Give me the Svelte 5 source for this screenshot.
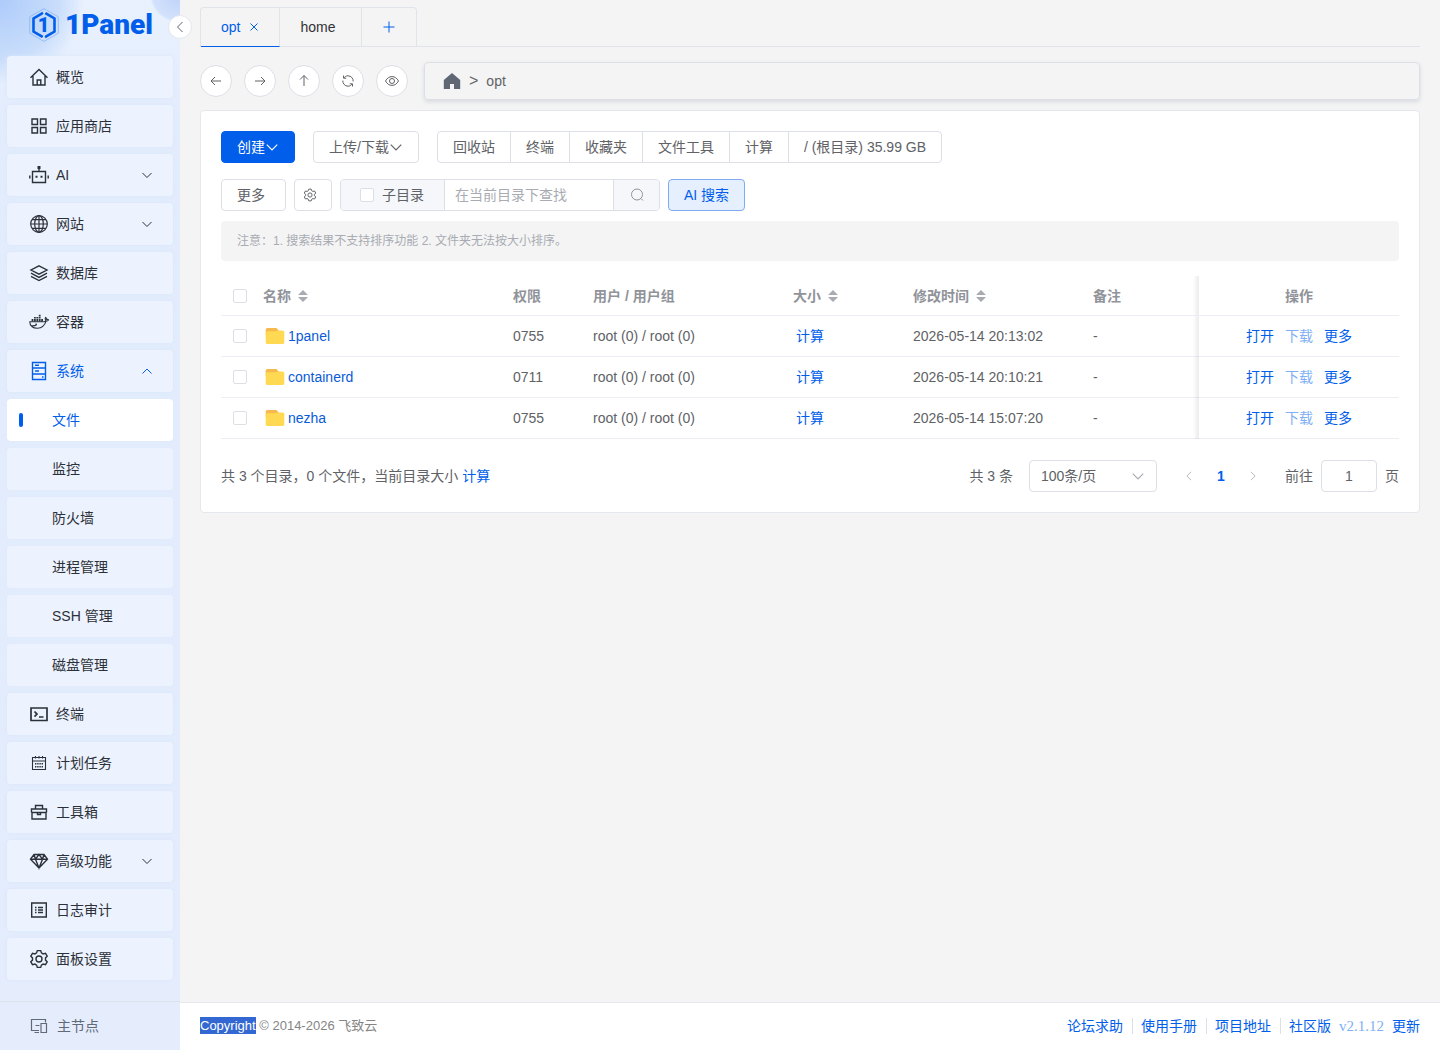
<script lang="ts">
  interface MenuItem {
    label: string;
    icon?: string;
    arrow?: 'down' | 'up';
    child?: boolean;
    active?: boolean;
  }

  interface FileRow {
    name: string;
    mode: string;
    owner: string;
    modified: string;
    remark: string;
    checked: boolean;
  }

  const menu: MenuItem[] = [
    { label: '概览', icon: 'home' },
    { label: '应用商店', icon: 'store' },
    { label: 'AI', icon: 'robot', arrow: 'down' },
    { label: '网站', icon: 'globe', arrow: 'down' },
    { label: '数据库', icon: 'layers' },
    { label: '容器', icon: 'docker' },
    { label: '系统', icon: 'server', arrow: 'up', active: true },
    { label: '文件', child: true, active: true },
    { label: '监控', child: true },
    { label: '防火墙', child: true },
    { label: '进程管理', child: true },
    { label: 'SSH 管理', child: true },
    { label: '磁盘管理', child: true },
    { label: '终端', icon: 'terminal' },
    { label: '计划任务', icon: 'calendar' },
    { label: '工具箱', icon: 'toolbox' },
    { label: '高级功能', icon: 'diamond', arrow: 'down' },
    { label: '日志审计', icon: 'log' },
    { label: '面板设置', icon: 'gear' }
  ];

  const tools = ['回收站', '终端', '收藏夹', '文件工具', '计算', '/ (根目录) 35.99 GB'];
  const navButtons = [
    { icon: 'left', label: '后退' },
    { icon: 'right', label: '前进' },
    { icon: 'up', label: '上一级' },
    { icon: 'refresh', label: '刷新' },
    { icon: 'view', label: '显示隐藏文件' }
  ];
  const footerLinks = ['论坛求助', '使用手册', '项目地址'];

  let rows: FileRow[] = $state([
    { name: '1panel', mode: '0755', owner: 'root (0) / root (0)', modified: '2026-05-14 20:13:02', remark: '-', checked: false },
    { name: 'containerd', mode: '0711', owner: 'root (0) / root (0)', modified: '2026-05-14 20:10:21', remark: '-', checked: false },
    { name: 'nezha', mode: '0755', owner: 'root (0) / root (0)', modified: '2026-05-14 15:07:20', remark: '-', checked: false }
  ]);

  let keyword = $state('');
  let containSub = $state(false);
  let pageSize = $state('100');
  let jumpPage = $state('1');
  let allChecked = $derived(rows.every((row) => row.checked));

  function toggleAll() {
    const next = !allChecked;
    rows.forEach((row) => (row.checked = next));
  }
</script>

{#snippet chevron(dir: string, size: number)}
  <svg class="line" width={size} height={size} viewBox="0 0 12 12" aria-hidden="true">
    {#if dir === 'down'}
      <path d="M1.500 4 6 8.500 10.500 4" />
    {:else if dir === 'up'}
      <path d="M1.500 8.500 6 4l4.500 4.500" />
    {:else if dir === 'left'}
      <path d="M8.500 1 3.500 6l5 5" />
    {:else}
      <path d="M3.500 1l5 5-5 5" />
    {/if}
  </svg>
{/snippet}

{#snippet gearShape()}
  <path d="M8.300 1.600h3.400l.7 2.300 1.700 1 2.400-.6 1.700 2.900-1.700 1.700v2.200l1.700 1.700-1.700 2.900-2.400-.6-1.700 1-.7 2.300H8.300l-.7-2.300-1.700-1-2.400.6-1.700-2.900 1.700-1.700V8.900L1.800 7.200l1.700-2.900 2.400.6 1.700-1z" />
  <circle cx="10" cy="10" r="3" />
{/snippet}

{#snippet menuIcon(name: string)}
  <svg class="menu-icon" width="20" height="20" viewBox="0 0 20 20" aria-hidden="true">
    {#if name === 'home'}
      <path d="M1.500 10.800 10 2.500l8.500 8.300M4 9v9h12V9M8.200 18v-5h3.600v5" />
    {:else if name === 'store'}
      <path d="M3 3h5.500v5.500H3zM11.500 3H17v5.500h-5.500zM3 11.500h5.500V17H3zM11.500 11.500H17V17h-5.500z" />
    {:else if name === 'robot'}
      <path d="M3.500 6.500h13v11h-13zM10 6.500V3M.8 10.500v3M19.200 10.500v3" />
      <path class="solid" d="M8.500 1h3v3h-3zM6.500 10.700h2v2h-2zM11.500 10.700h2v2h-2z" />
    {:else if name === 'globe'}
      <g stroke-width="1.200">
        <circle cx="10" cy="10" r="8.300" />
        <ellipse cx="10" cy="10" rx="4.300" ry="8.300" />
        <path d="M10 1.700v16.600M1.700 10h16.600M3 5.700h14M3 14.300h14" />
      </g>
    {:else if name === 'layers'}
      <path d="M10 2.800 18 7l-8 4.200L2 7zM2 10.200l8 4.200 8-4.200M2 13.300l8 4.200 8-4.200" />
    {:else if name === 'docker'}
      <g stroke-width="1.100">
        <path d="M.8 9.700h14.400c1 0 1.500-.5 1.700-1.500-.9-.9-.8-1.900-.3-2.800 1 .5 1.400 1.200 1.300 2 .7-.1 1.300.1 1.700.5-.5.9-1.300 1.300-2.500 1.300-1.500 4.500-4.300 7-8.600 7-5 0-7.700-2.400-7.700-6.500zM1.800 13.800c2.500.3 4.500 0 6-1.300" />
      </g>
      <path class="solid" d="M2.600 7h1.800v2.400H2.600zM5 7h1.800v2.400H5zM7.400 7h1.800v2.400H7.400zM9.800 7h1.800v2.400H9.800zM12.200 7H14v2.400h-1.800zM5 4.900h1.800v1.700H5zM7.400 4.900h1.800v1.700H7.400zM9.800 4.900h1.800v1.700H9.800zM9.800 2.800h1.800v1.700H9.800zM6.500 11.500h1.200v1.200H6.500z" />
    {:else if name === 'server'}
      <path d="M3.500 1.500h13v17h-13zM3.500 7h13M3.500 13h13M6 4.200h4M6 10h4M13 16h1.500" />
    {:else if name === 'terminal'}
      <g stroke-width="1.700">
        <path d="M2 4h16v12.500H2zM5.500 7.500 8 10.100l-2.500 2.600M10 13h4.500" />
      </g>
    {:else if name === 'calendar'}
      <g stroke-width="1.100">
        <path d="M3.500 4.500h13v12h-13zM3.500 8h13M6.500 3v2.500M10 3v2.500M13.500 3v2.500" />
      </g>
      <path class="solid" d="M6 10h1.400v1.400H6zM8.200 10h1.400v1.400H8.200zM10.400 10h1.400v1.400h-1.400zM12.600 10H14v1.400h-1.400zM6 13h1.400v1.400H6zM8.200 13h1.400v1.400H8.200zM10.400 13h1.400v1.400h-1.400zM12.600 13H14v1.400h-1.400z" />
    {:else if name === 'toolbox'}
      <path d="M3 10.500V17h14v-6.500M2.500 10.500V7h15v3.500M2.500 10.500h15M6.500 7V3.500h7V7M8.500 10.500v2h3v-2" />
    {:else if name === 'diamond'}
      <path d="M5 3.500h10l3.500 4.700L10 17 1.500 8.200zM1.500 8.200h17M5 3.500l1.500 4.700L10 17l3.500-8.800L15 3.500M6.500 8.200 10 3.500l3.500 4.700" />
    {:else if name === 'log'}
      <path d="M2.700 3h14.600v14H2.700zM9 7.500h5M9 10h5M9 12.500h5M6 7.500h1.500M6 10h1.500M6 12.500h1.500" />
    {:else if name === 'gear'}
      {@render gearShape()}
    {:else if name === 'node'}
      <g stroke-width="1.200">
        <path d="M10 14.500H2.500v-11h14v3M5.500 16.500H10M6.500 9.500h4M12 7.500h5.500v9H12z" />
      </g>
    {/if}
  </svg>
{/snippet}

{#snippet sorter()}
  <svg class="sorter" width="10" height="14" viewBox="0 0 10 14" aria-hidden="true">
    <path d="M5 1l5 5H0zM0 8h10l-5 5z" />
  </svg>
{/snippet}

<div class="layout">
  <aside class="sidebar">
    <a class="logo" href="#home">
      <svg width="30" height="34" viewBox="0 0 30 34" aria-hidden="true">
        <path class="hex-outer" d="M15 .6 29.300 8.800v16.400L15 33.400.7 25.200V8.800z" />
        <path class="hex" d="m14 4.800-9.500 5.700v13l9.500 5.700M16 29.200l9.500-5.700v-13L16 4.800" />
        <path class="cut" d="m17.500 2.500-3.500 5M12.500 31.500l3.500-5" />
        <text x="14.500" y="24" text-anchor="middle">1</text>
      </svg>
      <span>1Panel</span>
    </a>
    <button class="collapse" aria-label="收起菜单">{@render chevron('left', 12)}</button>

    <nav class="menu">
      {#each menu as item}
        <a
          href="#{item.label}"
          class="menu-item"
          class:child={item.child}
          class:active={item.active}
        >
          {#if item.icon}{@render menuIcon(item.icon)}{/if}
          <span>{item.label}</span>
          {#if item.arrow}
            <i class="arrow">{@render chevron(item.arrow, 12)}</i>
          {/if}
        </a>
      {/each}
    </nav>

    <button class="node">
      {@render menuIcon('node')}
      <span>主节点</span>
    </button>
  </aside>

  <main>
    <div class="content">
      <div class="tabs">
        <div class="tab-list">
          <div class="tab current">
            <a href="#opt">opt</a>
            <button aria-label="关闭标签">
              <svg class="line" width="10" height="10" viewBox="0 0 10 10"><path d="m1.500 1.500 7 7M8.500 1.500l-7 7" /></svg>
            </button>
          </div>
          <div class="tab"><a href="#home-tab">home</a></div>
          <button class="tab add" aria-label="新增标签">
            <svg class="line" width="12" height="12" viewBox="0 0 12 12"><path d="M6 .5v11M.5 6h11" /></svg>
          </button>
        </div>
      </div>

      <div class="path-row">
        <div class="nav-buttons">
          {#each navButtons as button}
            <button class="round" aria-label={button.label}>
              <svg class="line" width="14" height="14" viewBox="0 0 14 14">
                {#if button.icon === 'left'}
                  <path d="M12 7H2M6 3 2 7l4 4" />
                {:else if button.icon === 'right'}
                  <path d="M2 7h10M8 3l4 4-4 4" />
                {:else if button.icon === 'up'}
                  <path d="M7 12V1.500M3 5.500l4-4 4 4" />
                {:else if button.icon === 'refresh'}
                  <path d="M12.200 7.500c.2-3-2-5.700-5.200-5.700-1.700 0-3.200.8-4.200 2.200M2.500 1.500V4.200H5.200M1.800 6.500c-.2 3 2 5.700 5.200 5.700 1.700 0 3.200-.8 4.200-2.200M11.500 12.500V9.800H8.800" />
                {:else}
                  <path d="M.5 7C2 4.200 4.200 2.600 7 2.600S12 4.200 13.500 7C12 9.800 9.800 11.400 7 11.400S2 9.800.5 7z" />
                  <circle cx="7" cy="7" r="2.500" />
                {/if}
              </svg>
            </button>
          {/each}
        </div>
        <div class="path-bar">
          <a href="#root" aria-label="根目录">
            <svg width="18" height="16" viewBox="0 0 18 16"><path d="M9 0 .8 7v9H7v-5h4v5h6.200V7z" /></svg>
          </a>
          <span class="sep">&gt;</span>
          <a href="#opt">opt</a>
        </div>
      </div>

      <section class="card">
        <div class="toolbar">
          <button class="btn primary">创建{@render chevron('down', 14)}</button>
          <button class="btn">上传/下载{@render chevron('down', 14)}</button>
          <div class="btn-group">
            {#each tools as tool}
              <button class="btn">{tool}</button>
            {/each}
          </div>
        </div>

        <div class="toolbar search-row">
          <button class="btn wide">更多</button>
          <button class="btn setting" aria-label="列设置">
            <svg class="line" width="14" height="14" viewBox="0 0 20 20">{@render gearShape()}</svg>
          </button>
          <div class="search">
            <label class="sub-dir">
              <input type="checkbox" bind:checked={containSub} />
              <span>子目录</span>
            </label>
            <input
              type="text"
              aria-label="查找"
              placeholder="在当前目录下查找"
              bind:value={keyword}
            />
            <button aria-label="搜索">
              <svg class="line" width="14" height="14" viewBox="0 0 14 14"><circle cx="7" cy="6.500" r="5.500" /><path d="m11 10.500 2 2" /></svg>
            </button>
          </div>
          <button class="btn ai">AI 搜索</button>
        </div>

        <p class="notice">注意：1. 搜索结果不支持排序功能 2. 文件夹无法按大小排序。</p>

        <table>
          <colgroup>
            <col class="c-check" />
            <col class="c-name" />
            <col class="c-mode" />
            <col class="c-owner" />
            <col class="c-size" />
            <col class="c-time" />
            <col />
            <col class="c-ops" />
          </colgroup>
          <thead>
            <tr>
              <th class="check">
                <input type="checkbox" aria-label="全选" checked={allChecked} onchange={toggleAll} />
              </th>
              <th>名称 {@render sorter()}</th>
              <th>权限</th>
              <th>用户 / 用户组</th>
              <th>大小 {@render sorter()}</th>
              <th>修改时间 {@render sorter()}</th>
              <th>备注</th>
              <th class="ops">操作</th>
            </tr>
          </thead>
          <tbody>
            {#each rows as row (row.name)}
              <tr>
                <td class="check">
                  <input type="checkbox" aria-label={row.name} bind:checked={row.checked} />
                </td>
                <td>
                  <a class="file" href="#{row.name}">
                    <svg width="20" height="18" viewBox="0 0 20 18" aria-hidden="true">
                      <path fill="#f7b84e" d="M2.500 1h9l2.500 3v4H.7V3c0-1.200.7-2 1.800-2z" />
                      <path fill="#ffd952" d="M.7 6c0-1.100.7-1.800 1.800-1.800h8L13 3.500h4.500c1.100 0 1.800.8 1.800 1.800v9.900c0 1.100-.7 1.800-1.800 1.800h-15c-1.100 0-1.800-.7-1.800-1.800z" />
                    </svg>
                    {row.name}
                  </a>
                </td>
                <td>{row.mode}</td>
                <td>{row.owner}</td>
                <td><button class="link size">计算</button></td>
                <td>{row.modified}</td>
                <td>{row.remark}</td>
                <td class="ops">
                  <div class="actions">
                    <button class="link">打开</button>
                    <button class="link" disabled>下载</button>
                    <button class="link">更多</button>
                  </div>
                </td>
              </tr>
            {/each}
          </tbody>
        </table>

        <div class="table-footer">
          <div class="summary">
            共 3 个目录，0 个文件，当前目录大小 <button class="link">计算</button>
          </div>
          <div class="pagination">
            <span>共 3 条</span>
            <div class="select">
              <select aria-label="每页条数" bind:value={pageSize}>
                <option value="100">100条/页</option>
                <option value="200">200条/页</option>
              </select>
              <i>{@render chevron('down', 14)}</i>
            </div>
            <div class="pager">
              <button disabled aria-label="上一页">{@render chevron('left', 10)}</button>
              <button class="page">1</button>
              <button disabled aria-label="下一页">{@render chevron('right', 10)}</button>
            </div>
            <label class="jump">
              <span>前往</span>
              <input type="text" bind:value={jumpPage} />
              <span>页</span>
            </label>
          </div>
        </div>
      </section>
    </div>

    <footer>
      <div class="copyright"><mark>Copyright</mark> © 2014-2026 飞致云</div>
      <div class="footer-links">
        {#each footerLinks as link}
          <a class="divided" href="#{link}">{link}</a>
        {/each}
        <a href="#edition">社区版</a>
        <span class="version">v2.1.12</span>
        <button class="link">更新</button>
      </div>
    </footer>
  </main>
</div>

<style>
  :global(body) {
    margin: 0;
    background: #f4f4f4;
  }

  .layout {
    display: flex;
    min-height: 100vh;
    color: #606266;
    font-family: "Liberation Sans", "Noto Sans CJK SC", sans-serif;
    font-size: 14px;
    line-height: 20px;
  }

  .layout :is(button, input, select) {
    box-sizing: border-box;
    margin: 0;
    padding: 0;
    font: inherit;
    color: inherit;
  }

  button {
    border: none;
    background: none;
    cursor: pointer;
  }

  a {
    color: inherit;
    text-decoration: none;
  }

  i {
    display: flex;
  }

  .line {
    fill: none;
    stroke: currentColor;
    stroke-width: 1;
    flex: none;
  }

  /* sidebar */
  .sidebar {
    position: relative;
    display: flex;
    flex-direction: column;
    box-sizing: border-box;
    flex: 0 0 180px;
    background:
      radial-gradient(circle at 178px -6px, #bdd2fa 0, #d3e2fc 26px, transparent 28px),
      radial-gradient(circle at 0 0, #adcbfa 0, #cadefb 60px, transparent 84px),
      linear-gradient(#e9f1fe 0, #e2ecfc 130px, #e2ecfc 700px, #e5edfd 100%);
  }

  .logo {
    display: flex;
    align-items: center;
    gap: 6px;
    height: 50px;
    padding-left: 29px;
    color: #005eeb;
    font-family: Roboto, sans-serif;
    font-weight: 900;
    font-size: 28px;
  }

  .logo path {
    fill: none;
    stroke: #005eeb;
  }

  .logo .hex-outer {
    stroke: #7fb0f5;
    stroke-width: 0.700;
  }

  .logo .hex {
    stroke-width: 2.600;
  }

  .logo .cut {
    stroke: #dce9fd;
    stroke-width: 1;
  }

  .logo text {
    fill: #005eeb;
    font-size: 20px;
  }

  .collapse {
    position: absolute;
    top: 15px;
    right: -12px;
    display: flex;
    align-items: center;
    justify-content: center;
    width: 24px;
    height: 24px;
    border: 1px solid #e4e7ed;
    border-radius: 50%;
    background: #fff;
  }

  .menu {
    display: flex;
    flex-direction: column;
    gap: 7px;
    padding: 6px 7px 21px;
  }

  .menu-item {
    display: flex;
    align-items: center;
    gap: 7px;
    height: 42px;
    padding: 0 20px 0 22px;
    border-radius: 4px;
    background: #edf3fe;
    box-shadow: 0 0 4px #d9e6fb;
    color: #2c3039;
  }

  .menu-icon {
    flex: none;
    fill: none;
    stroke: currentColor;
    stroke-width: 1.400;
  }

  .menu-icon .solid {
    fill: currentColor;
    stroke: none;
  }

  .menu-item.child {
    position: relative;
    padding-left: 45px;
    box-shadow: 0 0 4px #e0eafc;
  }

  .menu-item.active {
    color: #005eeb;
  }

  .menu-item.child.active {
    background: #fff;
  }

  .menu-item.child.active::before {
    content: '';
    position: absolute;
    left: 12px;
    width: 4px;
    height: 14px;
    border-radius: 2px;
    background: #005eeb;
  }

  .arrow {
    margin-left: auto;
  }

  .node {
    display: flex;
    align-items: center;
    gap: 8px;
    height: 48px;
    margin-top: auto;
    padding: 0 29px !important;
    border-top: 1px solid #dbe3ef;
    color: #606a78 !important;
  }

  /* main */
  main {
    display: flex;
    flex: 1;
    flex-direction: column;
    min-width: 0;
  }

  .content {
    flex: 1;
    padding: 7px 20px 20px;
  }

  .tabs {
    border-bottom: 1px solid #e0e3ea;
    margin-bottom: 15px;
  }

  .tab-list {
    display: inline-flex;
    height: 39px;
    margin-bottom: -1px;
    border: 1px solid #e0e3ea;
    border-bottom: none;
    border-radius: 4px 4px 0 0;
    vertical-align: bottom;
  }

  .tab {
    display: flex;
    align-items: center;
    gap: 9px;
    padding: 0 20px;
    border-right: 1px solid #e0e3ea;
    color: #303133;
  }

  .tab:not(.current, .add) {
    padding-right: 25px;
    padding-bottom: 1px;
  }

  .tab.current {
    border-bottom: 1px solid #005eeb;
    color: #005eeb;
  }

  .tab.current button {
    display: flex;
  }

  .tab.add {
    border-right: none;
    padding: 0 21px 1px;
    color: #005eeb;
  }

  .path-row {
    display: flex;
    align-items: center;
    gap: 16px;
    margin-bottom: 10px;
  }

  .nav-buttons {
    display: flex;
    gap: 12px;
  }

  .round {
    display: flex;
    align-items: center;
    justify-content: center;
    width: 32px;
    height: 32px;
    border: 1px solid #dcdfe6;
    border-radius: 50%;
    background: #fff;
  }

  .path-bar {
    display: flex;
    flex: 1;
    align-items: center;
    gap: 8px;
    height: 36px;
    padding: 0 17px 0 18px;
    border: 1px solid #dcdfe6;
    border-radius: 4px;
    box-shadow: 0 2px 4px #d8dadf;
  }

  .path-bar a {
    display: flex;
  }

  .path-bar svg {
    fill: #606774;
  }

  .path-bar .sep {
    font-size: 16px;
  }

  .card {
    padding: 20px;
    border: 1px solid #e4e7ed;
    border-radius: 4px;
    background: #fff;
  }

  .toolbar {
    display: flex;
    gap: 18px;
    margin-bottom: 16px;
  }

  .search-row {
    gap: 8px;
    margin-bottom: 10px;
  }

  .toolbar .btn {
    display: flex;
    align-items: center;
    height: 32px;
    padding: 0 15px;
    border: 1px solid #dcdfe6;
    border-radius: 4px;
    background: #fff;
    white-space: nowrap;
  }

  .toolbar .primary {
    border-color: #005eeb;
    background: #005eeb;
    color: #fff;
  }

  .toolbar .ai {
    border-color: #7facee;
    background: #e5effd;
    color: #005eeb;
  }

  .toolbar .wide {
    padding-right: 20px;
  }

  .toolbar .setting {
    padding: 0 14px 0 8px;
  }

  .setting svg {
    stroke-width: 1.400;
  }

  .btn-group {
    display: flex;
  }

  .btn-group .btn + .btn {
    margin-left: -1px;
  }

  .btn-group .btn:not(:first-child) {
    border-top-left-radius: 0;
    border-bottom-left-radius: 0;
  }

  .btn-group .btn:not(:last-child) {
    border-top-right-radius: 0;
    border-bottom-right-radius: 0;
  }

  input[type='checkbox'] {
    appearance: none;
    flex: none;
    width: 14px;
    height: 14px;
    border: 1px solid #dcdfe6;
    border-radius: 2px;
    background: #fff;
  }

  input[type='checkbox']:checked {
    border-color: #005eeb;
    background: #005eeb;
  }

  input[type='text'] {
    min-width: 0;
    outline: none;
  }

  .search {
    display: flex;
    box-sizing: border-box;
    width: 320px;
    height: 32px;
    border: 1px solid #dcdfe6;
    border-radius: 4px;
    overflow: hidden;
  }

  .sub-dir {
    display: flex;
    align-items: center;
    gap: 8px;
    padding: 0 20px 0 19px;
    border-right: 1px solid #dcdfe6;
    background: #f5f7fa;
  }

  .search input[type='text'] {
    flex: 1;
    padding: 0 10px;
    border: none;
  }

  .search input::placeholder {
    color: #a8abb2;
  }

  .search button {
    display: flex;
    align-items: center;
    justify-content: center;
    width: 46px;
    border-left: 1px solid #dcdfe6;
    background: #f5f7fa;
    color: #909399;
  }

  .notice {
    margin: 0 0 15px;
    padding: 10px 16px;
    border-radius: 4px;
    background: #f4f4f4;
    color: #a8abb2;
    font-size: 12px;
  }

  table {
    width: 100%;
    table-layout: fixed;
    border-spacing: 0;
  }

  .c-check {
    width: 30px;
  }

  .c-name {
    width: 250px;
  }

  .c-mode {
    width: 80px;
  }

  .c-owner,
  .c-ops {
    width: 200px;
  }

  .c-size {
    width: 120px;
  }

  .c-time {
    width: 180px;
  }

  th,
  td {
    box-sizing: border-box;
    height: 41px;
    padding: 0 12px;
    border-bottom: 1px solid #ebeef5;
    text-align: left;
    white-space: nowrap;
  }

  th {
    height: 40px;
    color: #909399;
    font-weight: 700;
  }

  .check {
    padding-right: 0;
  }

  .check input {
    display: block;
  }

  .ops {
    position: relative;
    text-align: center;
  }

  .ops::before {
    content: '';
    position: absolute;
    top: 0;
    bottom: 0;
    left: -6px;
    width: 6px;
    background: linear-gradient(to right, transparent, rgba(0, 0, 0, 0.08));
  }

  td.ops::before {
    bottom: -1px;
  }

  .sorter {
    margin-left: 3px;
    fill: #a8abb2;
    vertical-align: -2px;
  }

  .file {
    display: flex;
    align-items: center;
    gap: 3px;
    padding-left: 2px;
    color: #0a5bd8;
  }

  .layout .link {
    color: #005eeb;
  }

  .layout .link:disabled {
    color: #80aff5;
  }

  .layout .size {
    padding-left: 3px;
  }

  .actions {
    display: flex;
    justify-content: center;
    gap: 11px;
  }

  .table-footer {
    display: flex;
    align-items: center;
    justify-content: space-between;
    margin-top: 21px;
  }

  .pagination {
    display: flex;
    align-items: center;
    gap: 16px;
  }

  .select {
    position: relative;
  }

  .select select {
    appearance: none;
    display: block;
    width: 128px;
    height: 32px;
    padding: 0 11px;
    border: 1px solid #dcdfe6;
    border-radius: 4px;
    background: #fff;
  }

  .select i {
    position: absolute;
    top: 9px;
    right: 12px;
    color: #a8abb2;
    pointer-events: none;
  }

  .pager {
    display: flex;
  }

  .pager button {
    display: flex;
    align-items: center;
    justify-content: center;
    width: 32px;
    height: 32px;
    color: #a8abb2;
  }

  .pager .page {
    color: #005eeb;
    font-weight: 700;
  }

  .jump {
    display: flex;
    align-items: center;
    gap: 8px;
  }

  .jump input {
    width: 56px;
    height: 32px;
    border: 1px solid #dcdfe6;
    border-radius: 4px;
    text-align: center;
  }

  footer {
    display: flex;
    align-items: center;
    justify-content: space-between;
    box-sizing: border-box;
    height: 48px;
    padding: 0 20px 2px;
    border-top: 1px solid #e4e7ed;
    background: #fff;
  }

  .copyright {
    color: #858585;
    font-size: 13px;
  }

  .copyright mark {
    padding: 1px 0;
    background: #3367d1;
    color: #fff;
  }

  .footer-links {
    display: flex;
    align-items: center;
    gap: 8px;
    color: #005eeb;
  }

  .divided {
    padding-right: 9px;
    border-right: 1px solid #dcdfe6;
    line-height: 16px;
  }

  .version {
    color: #80aff5;
    font-family: "Liberation Serif", serif;
    font-size: 15px;
  }
</style>
